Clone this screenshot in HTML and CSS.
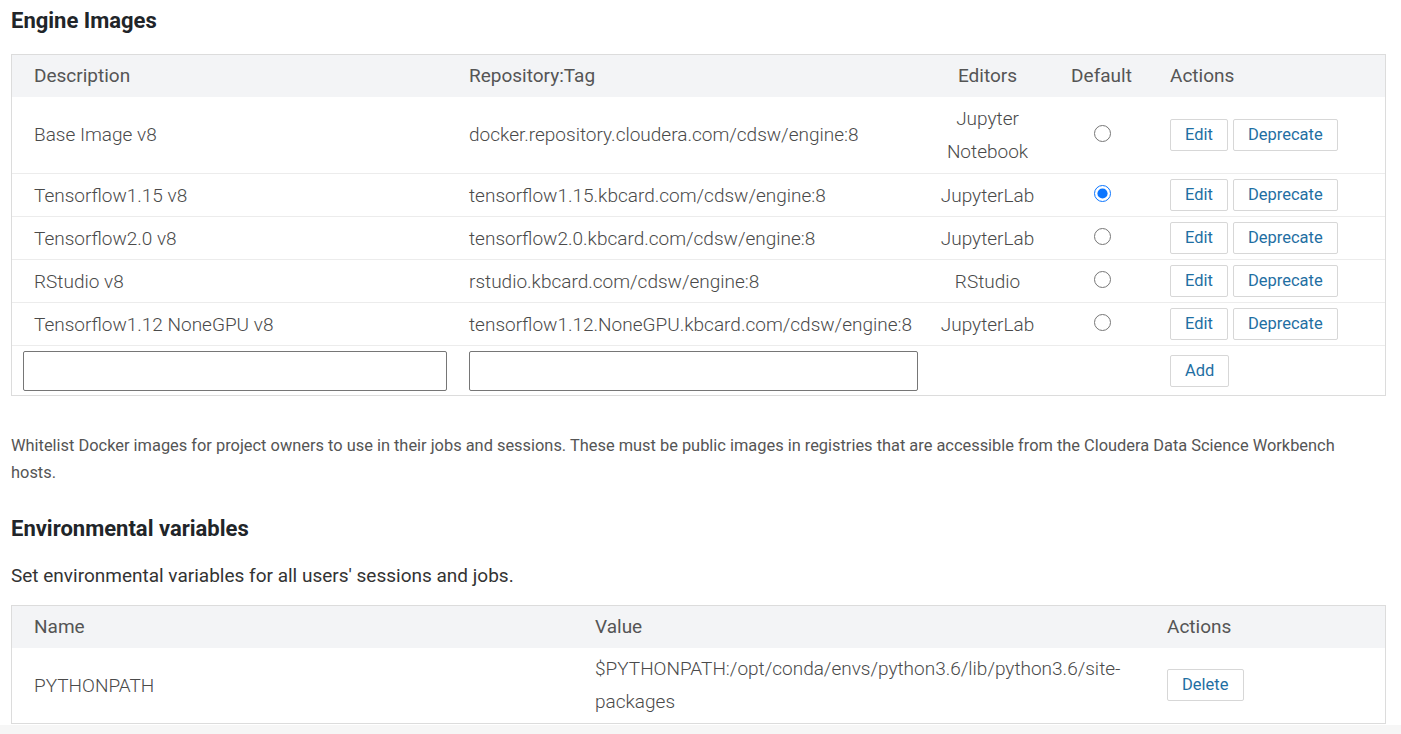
FILE: index.html
```html
<!DOCTYPE html>
<html>
<head>
<meta charset="utf-8">
<link rel="stylesheet" href="styles.css">
</head>
<body>
<div class="page">
  <h2 class="title">Engine Images</h2>
  <div class="tbl engines">
    <div class="row head">
      <div class="c desc">Description</div>
      <div class="c repo">Repository:Tag</div>
      <div class="c ed">Editors</div>
      <div class="c def">Default</div>
      <div class="c act">Actions</div>
    </div>
    <div class="row first">
      <div class="c desc">Base Image v8</div>
      <div class="c repo">docker.repository.cloudera.com/cdsw/engine:8</div>
      <div class="c ed">Jupyter<br>Notebook</div>
      <div class="c def"><input type="radio" name="def" class="radio"></div>
      <div class="c act"><button class="btn">Edit</button><button class="btn">Deprecate</button></div>
    </div>
    <div class="row">
      <div class="c desc">Tensorflow1.15 v8</div>
      <div class="c repo">tensorflow1.15.kbcard.com/cdsw/engine:8</div>
      <div class="c ed">JupyterLab</div>
      <div class="c def"><input type="radio" name="def" class="radio" checked></div>
      <div class="c act"><button class="btn">Edit</button><button class="btn">Deprecate</button></div>
    </div>
    <div class="row">
      <div class="c desc">Tensorflow2.0 v8</div>
      <div class="c repo">tensorflow2.0.kbcard.com/cdsw/engine:8</div>
      <div class="c ed">JupyterLab</div>
      <div class="c def"><input type="radio" name="def" class="radio"></div>
      <div class="c act"><button class="btn">Edit</button><button class="btn">Deprecate</button></div>
    </div>
    <div class="row">
      <div class="c desc">RStudio v8</div>
      <div class="c repo">rstudio.kbcard.com/cdsw/engine:8</div>
      <div class="c ed">RStudio</div>
      <div class="c def"><input type="radio" name="def" class="radio"></div>
      <div class="c act"><button class="btn">Edit</button><button class="btn">Deprecate</button></div>
    </div>
    <div class="row">
      <div class="c desc">Tensorflow1.12 NoneGPU v8</div>
      <div class="c repo">tensorflow1.12.NoneGPU.kbcard.com/cdsw/engine:8</div>
      <div class="c ed">JupyterLab</div>
      <div class="c def"><input type="radio" name="def" class="radio"></div>
      <div class="c act"><button class="btn">Edit</button><button class="btn">Deprecate</button></div>
    </div>
    <div class="row inputs">
      <div class="c desc"><input type="text" class="field"></div>
      <div class="c repo"><input type="text" class="field"></div>
      <div class="c ed"></div>
      <div class="c def"></div>
      <div class="c act"><button class="btn">Add</button></div>
    </div>
  </div>
  <p class="help">Whitelist Docker images for project owners to use in their jobs and sessions. These must be public images in registries that are accessible from the Cloudera Data Science Workbench hosts.</p>
  <h2 class="title env-title">Environmental variables</h2>
  <p class="lead">Set environmental variables for all users' sessions and jobs.</p>
  <div class="tbl envs">
    <div class="row head">
      <div class="c name">Name</div>
      <div class="c val">Value</div>
      <div class="c act">Actions</div>
    </div>
    <div class="row first">
      <div class="c name">PYTHONPATH</div>
      <div class="c val">$PYTHONPATH:/opt/conda/envs/python3.6/lib/python3.6/site-packages</div>
      <div class="c act"><button class="btn">Delete</button></div>
    </div>
  </div>
</div>
<div class="bottom"></div>
</body>
</html>
```
FILE: styles.css
```css
* { box-sizing: border-box; }
html, body { margin: 0; padding: 0; }
body {
  background: #f6f6f6;
  font-family: Roboto, "Liberation Sans", Arial, sans-serif;
  color: #555;
}
.page {
  background: #fff;
  height: 725px;
  overflow: hidden;
  padding: 7px 15px 0 11px;
}
.title {
  margin: 0;
  font-size: 22px;
  line-height: 28px;
  font-weight: 700;
  color: #212529;
}
.tbl {
  margin-top: 19px;
  width: 1375px;
  border: 1px solid #dcdcdc;
}
.row {
  display: grid;
  align-items: center;
  border-top: 1px solid #ececec;
  font-size: 19px;
  line-height: 33px;
  font-weight: 300;
  color: #4a4a4a;
}
.engines .row { grid-template-columns: 445px 473px 115px 113px 1fr; height: 43px; }
.envs .row { grid-template-columns: 571px 572px 1fr; }
.row.head {
  border-top: none;
  background: #f3f4f6;
  height: 42px;
  font-weight: 400;
  color: #555;
  padding-bottom: 2px;
}
.row.first { border-top: none; height: 76px; padding-bottom: 1px; }
.envs .row.first { height: 75px; }
.engines .row.inputs { height: 50px; }
.c { padding: 0 12px; }
.desc, .name { padding-left: 22px; }
.ed { text-align: center; padding: 0; }
.def { text-align: center; padding: 0; display: flex; justify-content: center; align-items: center; }
.act { display: flex; gap: 5px; align-items: center; }
.inputs .desc { padding-left: 11px; padding-right: 10px; }
.inputs .c { display: flex; align-items: center; }
.field {
  display: block;
  width: 100%;
  height: 40px;
  margin: 0;
  border: 1px solid #767676;
  border-radius: 2px;
  background: #fff;
}
.radio {
  width: 17px;
  height: 17px;
  margin: 0 0 3px 1px;
  accent-color: #0a75ff;
}
.btn {
  font-family: Roboto, "Liberation Sans", Arial, sans-serif;
  font-size: 16.5px;
  font-weight: 400;
  color: #1f6fa3;
  background: #fff;
  border: 1px solid #d7d7d7;
  border-radius: 2px;
  height: 32px;
  padding: 0 14px;
  line-height: 30px;
  margin: 0;
}
.help {
  margin: 36px 0 0 0;
  font-size: 16.4px;
  line-height: 27px;
  color: #555;
  width: 1372px;
}
.env-title { margin-top: 29px; }
.lead {
  margin: 19px 0 0 0;
  font-size: 19px;
  line-height: 27px;
  color: #333;
}
.envs { margin-top: 16px; }
.val { padding-right: 12px; }
.envs .act { padding-left: 12px; }
.bottom { height: 9px; }
```
